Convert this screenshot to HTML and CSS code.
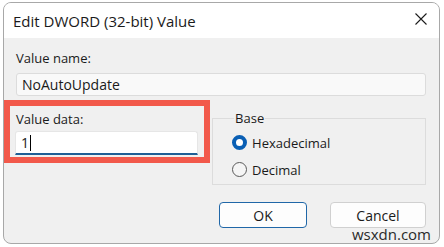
FILE: index.html
```html
<!DOCTYPE html>
<html lang="en">
<head>
    <meta charset="UTF-8">
    <meta name="viewport" content="width=device-width, initial-scale=1.0">
    <title>Edit DWORD (32-bit) Value</title>
    <link rel="stylesheet" href="styles.css">
</head>
<body>
    <div class="window">
        <div class="titlebar">
            <span class="title">Edit DWORD (32-bit) Value</span>
            <button class="close" aria-label="Close">
                <svg width="12" height="12" viewBox="0 0 12 12">
                    <path d="M0.5 0.5 L11.5 11.5 M11.5 0.5 L0.5 11.5" stroke="#1c1c1c" stroke-width="1.1" fill="none"/>
                </svg>
            </button>
        </div>
        <div class="content">
            <div class="label">Value name:</div>
            <div class="field name">NoAutoUpdate</div>

            <div class="row">
                <div class="data">
                    <div class="label">Value data:</div>
                    <div class="field edit">1<span class="caret"></span></div>
                </div>
                <fieldset class="base">
                    <legend>Base</legend>
                    <div class="radio"><span class="dot checked"></span>Hexadecimal</div>
                    <div class="radio"><span class="dot"></span>Decimal</div>
                </fieldset>
            </div>

            <div class="actions">
                <button class="btn primary">OK</button>
                <button class="btn cancel">Cancel</button>
            </div>
        </div>
        <div class="highlight"></div>
        <div class="watermark">wsxdn.com</div>
    </div>
</body>
</html>
```

FILE: styles.css
```css
body {
    margin: 0;
    background: #ffffff;
    font-family: "Open Sans", "Noto Sans", Arial, sans-serif;
    font-size: 13px;
    color: #1a1a1a;
}
.window {
    position: relative;
    box-sizing: border-box;
    width: 437px;
    height: 242px;
    margin: 2px 0 0 3px;
    background: #f0f0f0;
    border: 1px solid #a8a8a8;
    border-radius: 8px;
    overflow: hidden;
}
.titlebar {
    display: flex;
    align-items: center;
    justify-content: space-between;
    height: 35px;
    background: #ffffff;
    padding: 0 12px 0 9px;
}
.title {
    font-size: 15px;
    color: #1a1a1a;
}
.close {
    display: flex;
    padding: 0;
    margin-top: -4px;
    border: none;
    background: none;
}
.content {
    padding: 12px 13px 0 12px;
}
.label {
    line-height: 16px;
}
.field {
    box-sizing: border-box;
    height: 23px;
    line-height: 21px;
    padding: 0 5px;
    margin-top: 7px;
    font-size: 14px;
    border: 1px solid #dcdcdc;
    border-radius: 3px;
    background: #f9f9f9;
}
.row {
    display: flex;
    gap: 14px;
    margin-top: 8px;
}
.data {
    width: 184px;
    padding-top: 7px;
}
.field.edit {
    height: 24px;
    margin-top: 4px;
    margin-left: -1px;
    background: #ffffff;
    border: 1px solid #e6e6e6;
    border-bottom: 2px solid #1f5f96;
    border-radius: 3px 3px 0 0;
    padding-left: 5px;
}
.caret {
    display: inline-block;
    width: 1px;
    height: 16px;
    background: #000;
    vertical-align: -3px;
    margin-left: 1px;
}
.base {
    box-sizing: border-box;
    width: 216px;
    height: 75px;
    margin: 0;
    margin-top: 6px;
    padding: 3px 0 0 19px;
    border: 1px solid #dcdcdc;
}
.base legend {
    padding: 0 1px;
    margin-left: 2px;
    line-height: 16px;
}
.radio {
    display: flex;
    align-items: center;
    gap: 5px;
    height: 27px;
}
.dot {
    box-sizing: border-box;
    width: 15px;
    height: 15px;
    border-radius: 50%;
    border: 1px solid #5a5a5a;
    background: #f5f5f5;
}
.dot.checked {
    border: 4px solid #0a5fb4;
    background: #ffffff;
}
.actions {
    display: flex;
    justify-content: flex-end;
    gap: 23px;
    margin-top: 17px;
}
.btn {
    height: 26px;
    font-family: inherit;
    font-size: 14px;
    color: #1a1a1a;
    background: #fdfdfd;
    border: 1px solid #d0d0d0;
    border-radius: 4px;
}
.primary {
    width: 88px;
    border: 1px solid #2067a8;
}
.cancel {
    width: 96px;
}
.highlight {
    position: absolute;
    left: 0;
    top: 97px;
    width: 206px;
    height: 63px;
    box-sizing: border-box;
    border: 6px solid #f2594b;
}
.watermark {
    position: absolute;
    right: 8px;
    bottom: 3px;
    font-size: 15px;
    line-height: 12px;
    color: #2a2a2a;
}
```
